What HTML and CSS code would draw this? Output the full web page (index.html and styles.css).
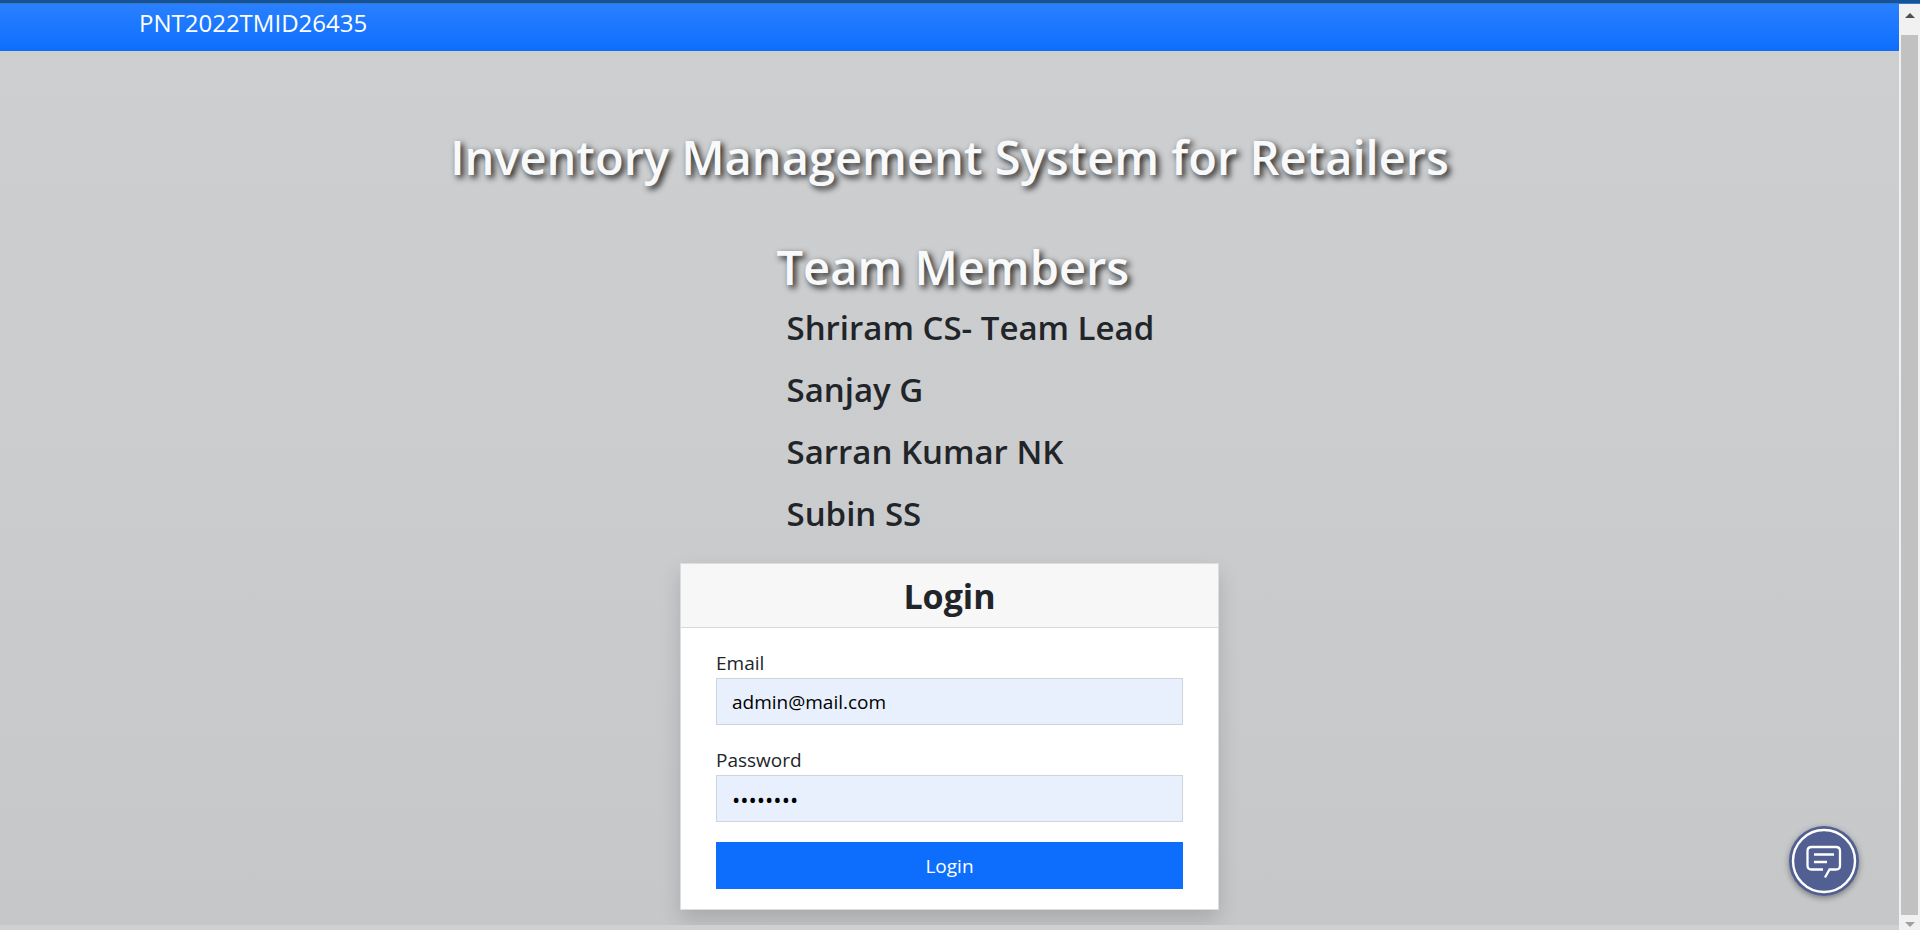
FILE: index.html
```html
<!DOCTYPE html>
<html lang="en">
<head>
<meta charset="utf-8">
<title>Inventory Management System for Retailers</title>
<link rel="stylesheet" href="styles.css">
</head>
<body>
<div class="window-edge"></div>
<div class="viewport">
  <div class="page">
    <header class="navbar">
      <a class="brand" href="#">PNT2022TMID26435</a>
    </header>
    <main class="content">
      <h1 class="headline">Inventory Management System for Retailers</h1>
      <section class="team">
        <h2 class="headline">Team Members</h2>
        <ul class="members">
          <li>Shriram CS- Team Lead</li>
          <li>Sanjay G</li>
          <li>Sarran Kumar NK</li>
          <li>Subin SS</li>
        </ul>
      </section>
      <section class="card">
        <h3 class="card-header">Login</h3>
        <form class="card-body">
          <div class="field">
            <label for="email">Email</label>
            <input id="email" type="email" value="admin@mail.com">
          </div>
          <div class="field">
            <label for="password">Password</label>
            <input id="password" type="password" value="password">
          </div>
          <button class="submit" type="button">Login</button>
        </form>
      </section>
    </main>
    <div class="page-end"></div>
    <button class="chat" type="button" aria-label="Open chat">
      <svg viewBox="0 0 70 70" fill="none" stroke="#fff">
        <circle cx="35" cy="35" r="31" stroke-width="2.4"/>
        <path d="M34 43.500H22.500Q18.500 43.500 18.500 39.500V25Q18.500 21 22.500 21H47Q51 21 51 25V39.500Q51 43.500 47 43.500H40.500L36 51.500" stroke-width="2.300"/>
        <path d="M25 28.500H45M25 36H38" stroke-width="2.300"/>
      </svg>
    </button>
  </div>
  <div class="scrollbar" aria-hidden="true">
    <svg class="arrow" viewBox="0 0 10 5"><path d="M0 5L5 0L10 5Z" fill="#505050"/></svg>
    <div class="thumb"></div>
    <svg class="arrow" viewBox="0 0 10 5"><path d="M0 0L5 5L10 0Z" fill="#a0a0a0"/></svg>
  </div>
</div>
</body>
</html>
```
FILE: styles.css
```css
* { box-sizing: border-box; }
body {
  margin: 0;
  display: flex;
  flex-direction: column;
  min-height: 100vh;
  font-family: "Open Sans", "Noto Sans", sans-serif;
  font-size: 19px;
  line-height: 30px;
  color: #212529;
}
h1, h2, h3, ul { margin: 0; padding: 0; }
.window-edge {
  height: 4px;
  background: #14539a;
  border-bottom: 1px solid #3a78bd;
}
.viewport { flex: 1; display: flex; }
.page {
  flex: 1;
  display: flex;
  flex-direction: column;
  position: relative;
  background: linear-gradient(#ced0cf, #cdced0 12%, #cbcccd 50%, #c6c7c9);
}
.navbar {
  height: 47px;
  padding-left: 139px;
  background: linear-gradient(#2a80ff, #0d6efd);
}
.brand {
  font-size: 24px;
  line-height: 38px;
  color: #fff;
  text-decoration: none;
}
.content {
  flex: 1;
  display: flex;
  flex-direction: column;
  align-items: center;
  padding: 76px 20px 12px;
}
.headline {
  font-size: 47px;
  line-height: 60px;
  font-weight: 600;
  color: #f8f9fa;
  text-shadow: 3px 3px 6px rgba(0, 0, 0, 0.9);
}
.team { margin-top: 50px; width: 346px; }
.team .headline, .members { white-space: nowrap; }
.members {
  list-style: none;
  margin: 10px 0 0 10px;
  display: flex;
  flex-direction: column;
  gap: 20px;
  font-size: 33px;
  line-height: 42px;
  font-weight: 600;
}
.card {
  width: 100%;
  max-width: 539px;
  margin-top: 28px;
  background: #fff;
  border: 1px solid #dcdddd;
  box-shadow: 0 10px 20px rgba(0, 0, 0, 0.15);
}
.card-header {
  padding: 11px 10px 9px;
  font-size: 34px;
  line-height: 43px;
  font-weight: 700;
  text-align: center;
  background: #f7f7f7;
  border-bottom: 1px solid #d8d9d9;
}
.card-body {
  display: flex;
  flex-direction: column;
  gap: 20px;
  padding: 20px 35px;
}
.field { display: flex; flex-direction: column; }
.field input {
  height: 47px;
  padding: 0 15px;
  border: 1px solid #ced4da;
  border-radius: 0;
  background: #e8f0fe;
  font: inherit;
  color: #000;
}
.field input[type="password"] { font-size: 22px; }
.submit {
  height: 47px;
  border: 0;
  background: #0d6efd;
  color: #fff;
  font: inherit;
}
.page-end { height: 5px; background: #cfd0d1; }
.chat {
  position: absolute;
  right: 40px;
  bottom: 34px;
  width: 70px;
  height: 70px;
  padding: 0;
  border: 0;
  border-radius: 50%;
  background: #525f92;
  box-shadow: 0 2px 6px rgba(0, 0, 0, 0.4);
}
.chat svg { display: block; }
.scrollbar {
  width: 21px;
  display: flex;
  flex-direction: column;
  align-items: center;
  padding: 9px 0 3px;
  background: #f1f1f1;
}
.arrow { width: 10px; height: 5px; }
.thumb { flex: 1; width: 17px; margin: 17px 0 7px; background: #c1c1c1; }
```
